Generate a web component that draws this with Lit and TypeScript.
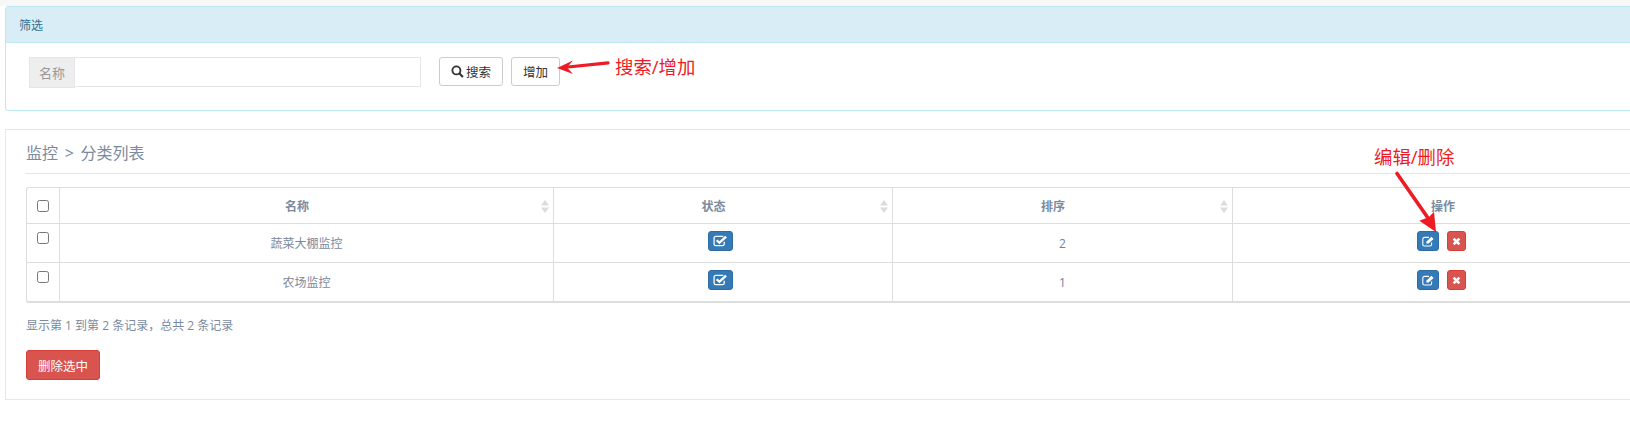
import { LitElement, html, css, svg } from "lit";
import { customElement } from "lit/decorators.js";

const checkIcon = html`<svg class="ico" width="15" height="12" viewBox="0 0 14 12" preserveAspectRatio="none"><path d="M10.5 6.8v2.2a1.6 1.6 0 0 1-1.6 1.6H2.6A1.6 1.6 0 0 1 1 9V3a1.6 1.6 0 0 1 1.6-1.6h7" fill="none" stroke="#fff" stroke-width="1.2"/><path d="M3.4 5.2 6 7.8 12.2 1.6" fill="none" stroke="#fff" stroke-width="2.2"/></svg>`;
const editIcon = html`<svg class="ico" width="13" height="11" viewBox="0 0 13 11"><path d="M9.6 6.4V8.4A1.6 1.6 0 0 1 8 10H2.4A1.6 1.6 0 0 1 .8 8.4V3A1.6 1.6 0 0 1 2.4 1.4H7" fill="none" stroke="#fff" stroke-width="1.1"/><path d="M4.2 7.6 4.6 5.4 9.4 .8 11.6 3 6.6 7.6Z" fill="#fff"/></svg>`;
const timesIcon = html`<svg class="ico" width="9" height="9" viewBox="0 0 9 9"><path d="M1.6 1.6 7.4 7.4M7.4 1.6 1.6 7.4" stroke="#fff" stroke-width="2.6" fill="none"/></svg>`;
const searchIcon = html`<svg class="ico" width="13" height="13" viewBox="0 0 12 12"><circle cx="5" cy="5" r="3.7" fill="none" stroke="#333" stroke-width="1.7"/><path d="M7.8 7.8 11 11" stroke="#333" stroke-width="2" fill="none"/></svg>`;
const sortIcon = html`<svg class="sort" width="8" height="13" viewBox="0 0 8 13"><path d="M4 0 8 5.5H0ZM4 13 0 7.5H8Z" fill="#dcdcdc"/></svg>`;

@customElement("app-root")
export class AppRoot extends LitElement {
  static styles = css`
    :host { display: block; width: 1630px; height: 421px; overflow: hidden; position: relative; background: #fff;
      font-family: "Open Sans", "Noto Sans CJK SC", sans-serif; font-size: 12px; color: #676a6c; }
    .strip { height: 6px; background: #f7f7f7; }
    .panel { width: 1669px; margin-left: 5px; box-sizing: border-box; }
    .filter { height: 105px; border: 1px solid #bce8f1; border-radius: 3px; }
    .filter-head { height: 36px; box-sizing: border-box; display: flex; align-items: center; padding: 0 13px;
      background: #d9edf7; border-bottom: 1px solid #bce8f1; color: #31708f; }
    .filter-body { display: flex; padding: 14px 23px; gap: 8px; align-items: flex-start; }
    .group { display: flex; width: 392px; height: 31px; margin-right: 10px; box-sizing: border-box; }
    .addon { width: 46px; box-sizing: border-box; background: #eee; border: 1px solid #e5e6e7; color: #999;
      display: flex; align-items: center; justify-content: center; font-size: 13px; }
    .input { flex: 1; border: 1px solid #e5e6e7; border-left: 0; height: 30px; box-sizing: border-box; }
    .btn { height: 29px; box-sizing: border-box; border: 1px solid #ccc; border-radius: 3px; background: #fff; color: #333;
      display: flex; align-items: center; justify-content: center; gap: 2px; font-size: 12.5px; }
    .search { width: 64px; }
    .add { width: 49px; }
    .list { margin-top: 18px; height: 271px; border: 1px solid #e7e7e7; padding: 0 20px; }
    .title { height: 43px; margin-left: -1px; padding-left: 1px; border-bottom: 1px solid #e7e7e7; display: flex; align-items: center;
      font-size: 16px; color: #7b8a9e; word-spacing: 2.5px; margin-right: -20px; }
    table { margin-top: 13px; width: 1628px; border-collapse: separate; border-spacing: 0; table-layout: fixed;
      border: 1px solid #ddd; border-bottom-width: 2px; border-radius: 3px; color: #7b8a9e; }
    th, td { text-align: center; font-size: 12px; border-left: 1px solid #ddd; padding: 0; box-sizing: border-box; position: relative; }
    th:first-child, td:first-child { border-left: 0; }
    th { height: 36px; border-bottom: 1px solid #ddd; font-weight: 700; padding-top: 1px; }
    th.sortable { padding-right: 19px; }
    td { height: 38px; }
    tr:nth-child(1) td { border-bottom: 1px solid #ddd; height: 39px; }
    input[type=checkbox] { margin: 0; width: 12px; height: 12px; display: block; }
    .cb { display: flex; justify-content: center; }
    td .cb { height: 100%; padding-top: 8px; box-sizing: border-box; }
    th .cb { padding-bottom: 1px; }
    .sort { position: absolute; right: 4px; top: 12px; }
    .num { color: #6f7fa8; }
    .icon-btn { display: inline-flex; align-items: center; justify-content: center; height: 20px; border-radius: 3px; vertical-align: middle; box-sizing: border-box; }
    .state { width: 25px; margin-right: 5px; }
    .btncell { padding-bottom: 4px; }
    .blue { background: #337ab7; border: 1px solid #2e6da4; }
    .edit { width: 22px; }
    .red { background: #d9534f; border: 1px solid #d43f3a; width: 19px; margin-left: 8px; }
    .ops { display: flex; justify-content: center; align-items: center; margin-left: -3px; }
    .ico { display: block; }
    .foot { margin: 14px 0 0; line-height: 17px; color: #7b8a9e; }
    .del { margin-top: 16px; width: 74px; height: 30px; background: #d9534f; border: 1px solid #d43f3a; color: #fff; font-size: 12.5px; }
    .note { position: absolute; color: #ed1c24; font-size: 18.4px; line-height: 24px; white-space: nowrap; font-family: "Open Sans", "Noto Sans CJK SC", sans-serif; }
    .n1 { left: 615px; top: 55px; }
    .n2 { left: 1374px; top: 145px; }
    .arrows { position: absolute; left: 0; top: 0; pointer-events: none; }
  `;

  private rows = [
    { name: "蔬菜大棚监控", sort: 2 },
    { name: "农场监控", sort: 1 },
  ];

  render() {
    return html`
      <div class="strip"></div>
      <section class="panel filter">
        <div class="filter-head">筛选</div>
        <div class="filter-body">
          <div class="group"><span class="addon">名称</span><span class="input"></span></div>
          <div class="btn search">${searchIcon}<span>搜索</span></div>
          <div class="btn add">增加</div>
        </div>
      </section>
      <section class="panel list">
        <div class="title">监控 &gt; 分类列表</div>
        <table>
          <colgroup><col class="c0"/><col class="c1"/><col class="c2"/><col class="c3"/><col/></colgroup>
          <thead><tr>
            <th style="width:32px"><div class="cb"><input type="checkbox"/></div></th>
            <th class="sortable" style="width:494px">名称${sortIcon}</th>
            <th class="sortable" style="width:339px">状态${sortIcon}</th>
            <th class="sortable" style="width:340px">排序${sortIcon}</th>
            <th>操作</th>
          </tr></thead>
          <tbody>
            ${this.rows.map((r) => html`<tr>
              <td><div class="cb"><input type="checkbox"/></div></td>
              <td>${r.name}</td>
              <td class="btncell"><span class="icon-btn blue state">${checkIcon}</span></td>
              <td class="num">${r.sort}</td>
              <td class="btncell"><div class="ops"><span class="icon-btn blue edit">${editIcon}</span><span class="icon-btn red">${timesIcon}</span></div></td>
            </tr>`)}
          </tbody>
        </table>
        <p class="foot">显示第 1 到第 2 条记录，总共 2 条记录</p>
        <div class="btn del">删除选中</div>
      </section>
      <span class="note n1">搜索/增加</span>
      <span class="note n2">编辑/删除</span>
      <svg class="arrows" width="1630" height="421" viewBox="0 0 1630 421">
        ${svg`<path d="M608 62.8 568 67" stroke="#ed1c24" stroke-width="3.2" fill="none" stroke-linecap="round"/>
        <path d="M557 68 573 60.5 567 67.5 573 74Z" fill="#ed1c24"/>
        <path d="M1397 173.5 1428 218" stroke="#ed1c24" stroke-width="3.6" fill="none" stroke-linecap="round"/>
        <path d="M1436 232 1419.3 220.7 1429 217 1434 211.7Z" fill="#ed1c24"/>`}
      </svg>
    `;
  }
}
